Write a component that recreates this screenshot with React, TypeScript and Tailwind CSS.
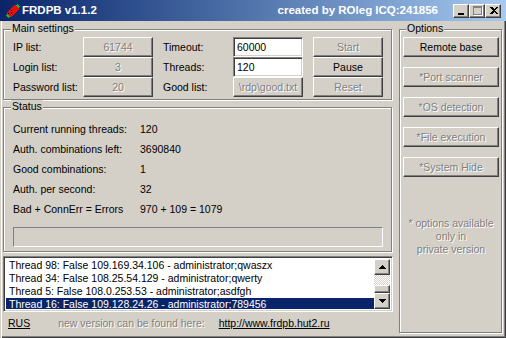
import type { ReactNode } from 'react'

const font = "font-['Liberation_Sans',Arial,sans-serif]"
const raised =
  'border border-t-white border-l-white border-r-[#404040] border-b-[#404040] shadow-[inset_-1px_-1px_0_#808080] bg-[#d4d0c8]'
const sunken =
  'border border-t-[#808080] border-l-[#808080] border-r-white border-b-white shadow-[inset_1px_1px_0_#404040,inset_-1px_-1px_0_#d4d0c8]'
const etched = 'text-[#808080] [text-shadow:1px_1px_0_#fff]'

function Btn({ children, disabled, className = '' }: { children: ReactNode; disabled?: boolean; className?: string }) {
  return (
    <div className={`${raised} flex h-[20px] items-center justify-center ${disabled ? etched : 'text-black'} ${className}`}>
      {children}
    </div>
  )
}

function Group({ label, labelLeft, className, children }: { label: string; labelLeft: string; className: string; children: ReactNode }) {
  return (
    <div className={`relative border border-[#808080] shadow-[inset_1px_1px_0_#fff,1px_1px_0_#fff] ${className}`}>
      <span className={`absolute -top-[8px] ${labelLeft} bg-[#d4d0c8] px-[1px] leading-[13px]`}>{label}</span>
      {children}
    </div>
  )
}

function AppIcon() {
  return (
    <svg width="16" height="16" viewBox="0 0 16 16" shapeRendering="crispEdges">
      <g transform="rotate(-45 8 8)">
        <rect x="2" y="5" width="12" height="6" fill="#e01010" />
        <rect x="3" y="6" width="1" height="1" fill="#000" />
        <rect x="5" y="8" width="1" height="1" fill="#000" />
        <rect x="7" y="6" width="1" height="1" fill="#000" />
        <rect x="9" y="9" width="1" height="1" fill="#000" />
        <rect x="11" y="7" width="1" height="1" fill="#000" />
        <rect x="0" y="6" width="2" height="4" fill="#10c020" />
        <rect x="14" y="6" width="2" height="4" fill="#10c020" />
      </g>
    </svg>
  )
}

function CaptionBtn({ children }: { children: ReactNode }) {
  return <div className={`${raised} flex h-[14px] w-[16px] items-center justify-center`}>{children}</div>
}

const statusRows = [
  ['Current running threads:', '120'],
  ['Auth. combinations left:', '3690840'],
  ['Good combinations:', '1'],
  ['Auth. per second:', '32'],
  ['Bad + ConnErr = Errors', '970 + 109 = 1079']
]

const logLines = [
  'Thread 98: False 109.169.34.106 - administrator;qwaszx',
  'Thread 34: False 108.25.54.129 - administrator;qwerty',
  'Thread 5: False 108.0.253.53 - administrator;asdfgh',
  'Thread 16: False 109.128.24.26 - administrator;789456'
]

export default function App() {
  return (
    <div className={`${font} flex h-[338px] w-[506px] flex-col bg-[#d4d0c8] text-[10.5px] leading-[13px] text-black`}>
      {/* title bar */}
      <div className="flex h-[21px] shrink-0 items-center bg-gradient-to-r from-[#0a246a] to-[#a6caf0] pl-[5px] pr-[5px] text-[11.5px] font-bold text-white">
        <AppIcon />
        <span className="ml-[1px]">FRDPB v1.1.2</span>
        <span className="ml-auto mr-[15px]">created by ROleg ICQ:241856</span>
        <CaptionBtn>
          <div className="mt-[6px] h-[2px] w-[6px] bg-black" />
        </CaptionBtn>
        <CaptionBtn>
          <div className="h-[9px] w-[9px] border border-t-2 border-[#808080] shadow-[1px_1px_0_#fff]" />
        </CaptionBtn>
        <CaptionBtn>
          <svg width="8" height="7" viewBox="0 0 8 7" shapeRendering="crispEdges" className="ml-[2px]">
            <path d="M0 0h2l2 2 2-2h2L5 3.5 8 7H6L4 5 2 7H0l3-3.5z" fill="#000" />
          </svg>
        </CaptionBtn>
      </div>

      {/* body */}
      <div className="flex flex-1 pl-[3px] pt-[8px] shadow-[inset_1px_0_0_#d4d0c8,inset_2px_0_0_#fff,inset_-1px_-1px_0_#404040,inset_-2px_-2px_0_#808080]">
        <div className="flex w-[390px] flex-col">
          <Group label="Main settings" labelLeft="left-[7px]" className="h-[71px] w-[389px] pl-[9px] pt-[7px]">
            <div className="grid grid-cols-[70px_70px_80px_70px_80px] grid-rows-[20px_20px_20px]">
              <div className="flex items-center">IP list:</div>
              <Btn disabled>61744</Btn>
              <div className="flex items-center pl-[10px]">Timeout:</div>
              <div className={`${sunken} flex items-center bg-white pl-[3px]`}>60000</div>
              <Btn disabled className="ml-[10px]">Start</Btn>

              <div className="flex items-center">Login list:</div>
              <Btn disabled>3</Btn>
              <div className="flex items-center pl-[10px]">Threads:</div>
              <div className={`${sunken} flex items-center bg-white pl-[3px]`}>120</div>
              <Btn className="ml-[10px]">Pause</Btn>

              <div className="flex items-center whitespace-nowrap">Password list:</div>
              <Btn disabled>20</Btn>
              <div className="flex items-center pl-[10px]">Good list:</div>
              <Btn disabled className="overflow-hidden whitespace-nowrap">\rdp\good.txt</Btn>
              <Btn disabled className="ml-[10px]">Reset</Btn>
            </div>
          </Group>

          <Group label="Status" labelLeft="left-[7px]" className="mt-[7px] h-[145px] w-[389px] pl-[9px] pt-[11px]">
            {statusRows.map(([k, v]) => (
              <div key={k} className="flex h-[20px] items-center">
                <span className="w-[127px]">{k}</span>
                <span>{v}</span>
              </div>
            ))}
            <div className="mt-[8px] h-[20px] w-[370px] border border-t-[#808080] border-l-[#808080] border-b-white border-r-white" />
          </Group>

          {/* log list */}
          <div className={`${sunken} mt-[4px] flex h-[56px] w-[390px] bg-white p-[2px]`}>
            <div className="flex-1 overflow-hidden">
              {logLines.map((l, i) => (
                <div
                  key={l}
                  className={`h-[13px] whitespace-nowrap pl-[3px] ${i === 3 ? 'bg-[#0a246a] text-white' : ''}`}
                >
                  {l}
                </div>
              ))}
            </div>
            <div className="flex w-[16px] flex-col">
              <div className={`${raised} flex h-[16px] items-center justify-center`}>
                <svg width="7" height="4" viewBox="0 0 7 4" shapeRendering="crispEdges">
                  <path d="M3 0h1v1h1v1h1v1h1v1H0V3h1V2h1V1h1z" fill="#000" />
                </svg>
              </div>
              <div className="flex-1 bg-[repeating-conic-gradient(#fff_0_25%,#d4d0c8_0_50%)] bg-[length:2px_2px]" />
              <div className={`${raised} h-[8px]`} />
              <div className={`${raised} flex h-[16px] items-center justify-center`}>
                <svg width="7" height="4" viewBox="0 0 7 4" shapeRendering="crispEdges">
                  <path d="M0 0h7v1H6v1H5v1H4v1H3V3H2V2H1V1H0z" fill="#000" />
                </svg>
              </div>
            </div>
          </div>

          {/* footer */}
          <div className="flex h-[22px] items-center pl-[5px]">
            <span className="underline">RUS</span>
            <span className={`ml-[28px] ${etched}`}>new version can be found here:</span>
            <span className="ml-[14px] underline">http://www.frdpb.hut2.ru</span>
          </div>
        </div>

        <Group label="Options" labelLeft="left-[6px]" className="ml-[6px] h-[304px] w-[103px] pl-[3px] pt-[7px]">
          <div className="flex w-[96px] flex-col gap-[10px]">
            <Btn>Remote base</Btn>
            <Btn disabled>*Port scanner</Btn>
            <Btn disabled>*OS detection</Btn>
            <Btn disabled>*File execution</Btn>
            <Btn disabled>*System Hide</Btn>
          </div>
          <div className={`mt-[40px] w-[96px] text-center ${etched}`}>
            * options available
            <br />
            only in
            <br />
            private version
          </div>
        </Group>
      </div>
    </div>
  )
}
